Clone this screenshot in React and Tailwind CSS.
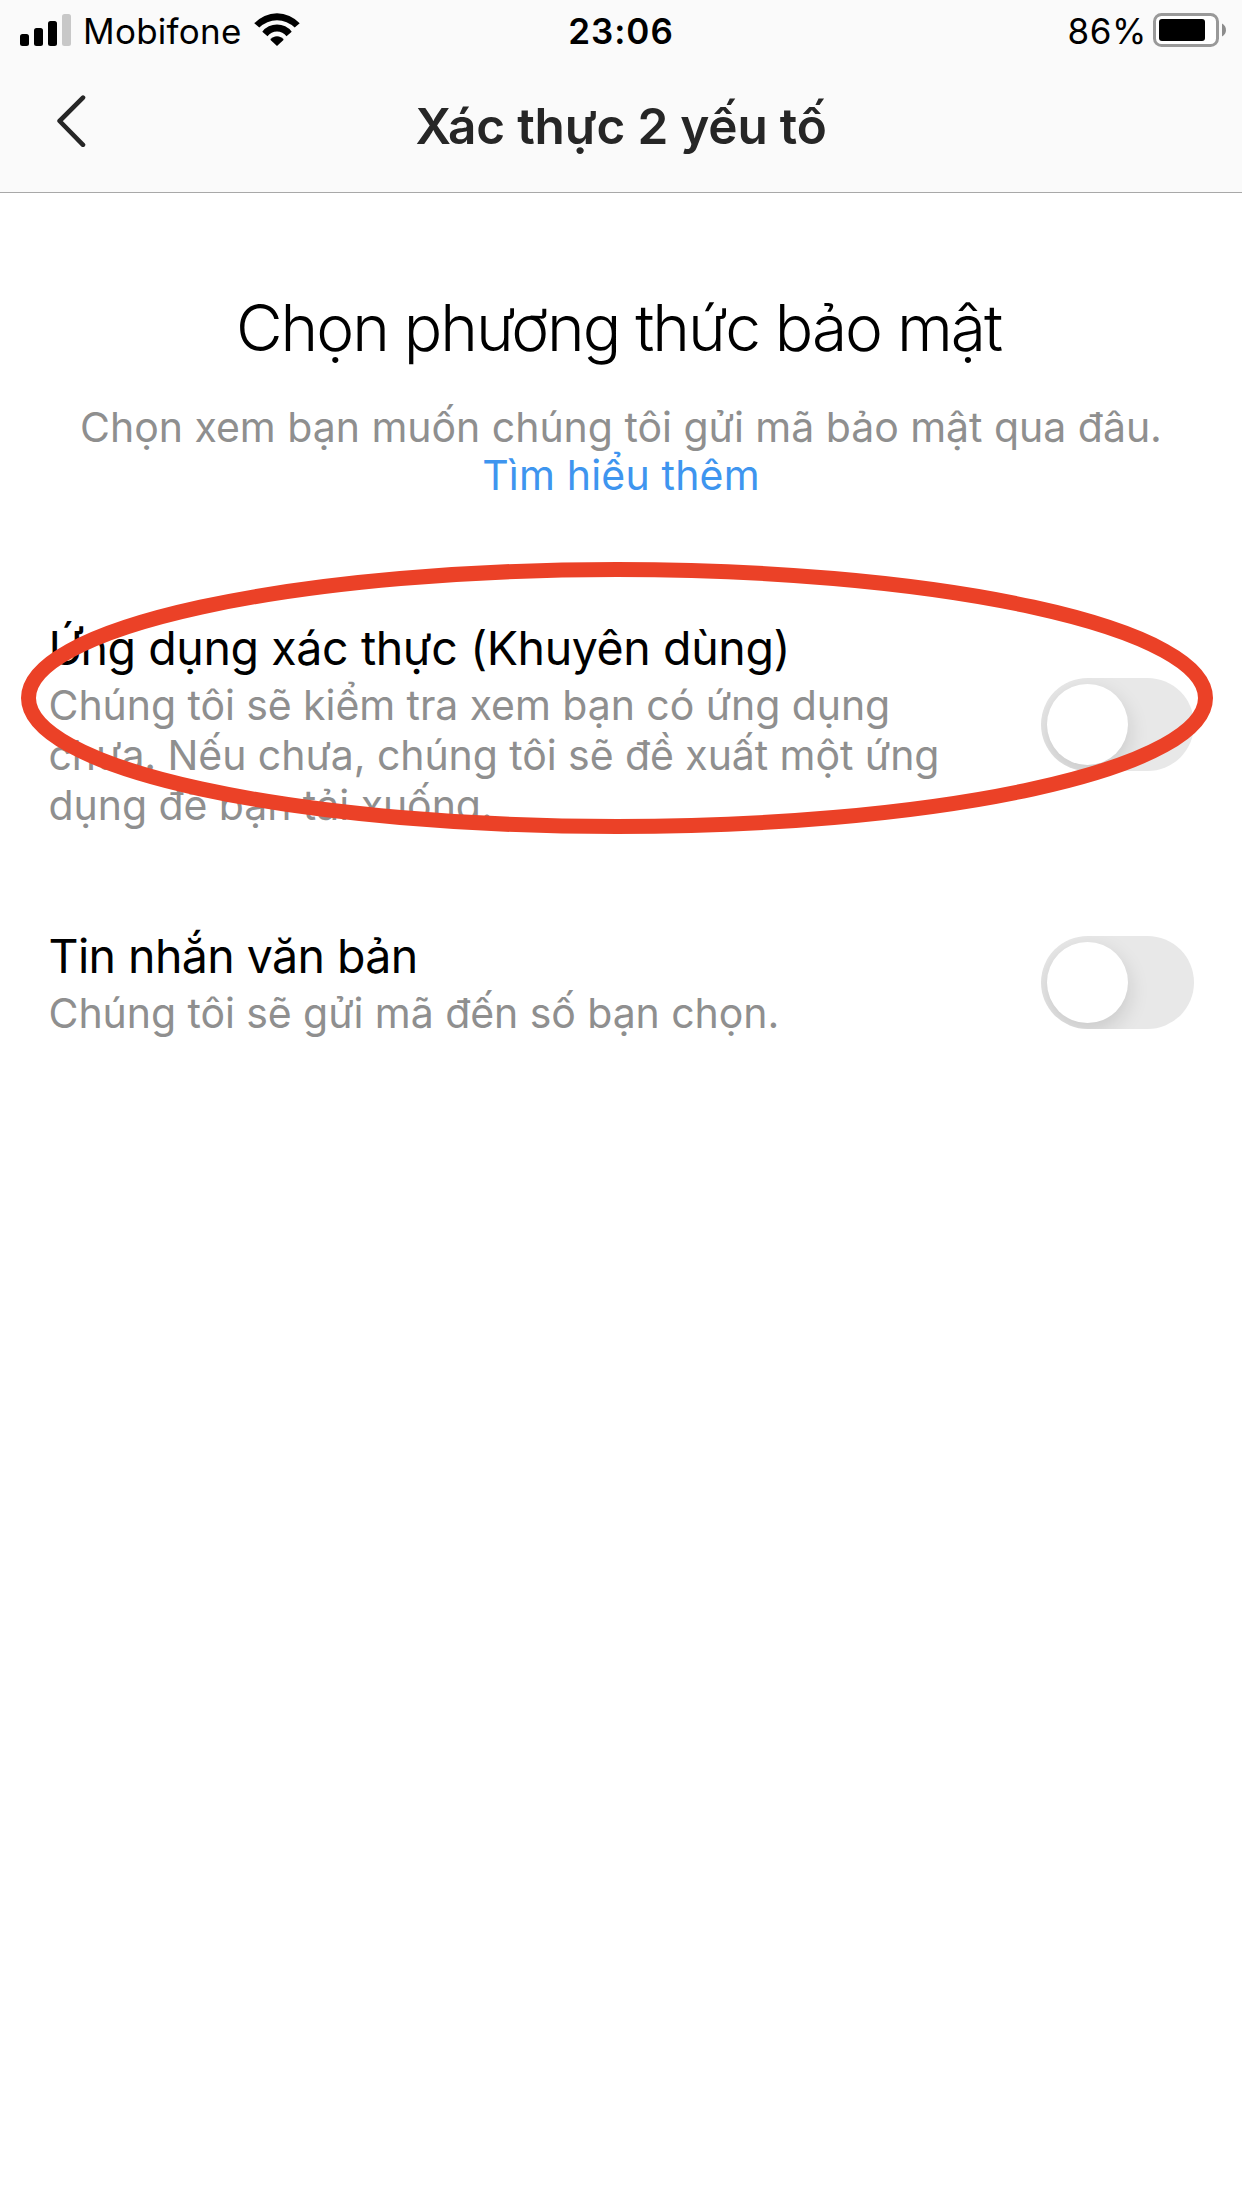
import React from "react";

const SignalIcon = () => (
  <svg className="mt-[14px] ml-5 h-8 w-[51px] shrink-0" viewBox="0 0 51 32">
    <rect x="0" y="20" width="9" height="12" rx="2.5" fill="#000" />
    <rect x="14" y="14" width="9" height="18" rx="2.5" fill="#000" />
    <rect x="28" y="7" width="9" height="25" rx="2.5" fill="#000" />
    <rect x="42" y="0" width="9" height="32" rx="2.5" fill="#c8c8c8" />
  </svg>
);

const WifiIcon = () => (
  <svg className="mt-[13px] h-[33px] w-[46px] shrink-0" viewBox="0 0 46 33" fill="#000">
    <path d="M0.3 10.3 A30.8 30.8 0 0 1 45.7 10.3 L40.7 14.6 A25.1 25.1 0 0 0 5.3 14.6 Z" />
    <path d="M8.3 18.7 A18.5 18.5 0 0 1 37.7 18.7 L32.5 23.2 A12 12 0 0 0 13.5 23.2 Z" />
    <path d="M16.3 26.8 A8.2 8.2 0 0 1 29.7 26.8 L23 33 Z" />
  </svg>
);

const BatteryIcon = () => (
  <svg className="mt-[13px] h-[34px] w-[73px] shrink-0" viewBox="0 0 73 34">
    <rect x="1.5" y="1.5" width="63" height="31" rx="7" fill="#fff" stroke="#999" strokeWidth="3" />
    <rect x="6" y="6" width="46" height="22" rx="3" fill="#000" />
    <path d="M69 10.5 C74.3 13 74.3 21 69 23.5 Z" fill="#8c8c8c" />
  </svg>
);

function StatusBar() {
  return (
    <div className="grid h-[62px] grid-cols-3 text-[35px] leading-[62px] text-black">
      <div className="flex">
        <SignalIcon />
        <span className="ml-3 w-[171px] tracking-[0.27px]">Mobifone</span>
        <WifiIcon />
      </div>
      <div className="text-center font-semibold tracking-[0.99px]">23:06</div>
      <div className="flex justify-end pr-4">
        <span className="mr-[6px] tracking-[0.6px]">86%</span>
        <BatteryIcon />
      </div>
    </div>
  );
}

function NavBar() {
  return (
    <div className="grid h-[130px] grid-cols-[200px_1fr_200px]">
      <button className="flex items-start pt-[33px] pl-[57px]" aria-label="Back">
        <svg className="h-[52px] w-[29px]" viewBox="0 0 29 52" fill="none" stroke="#262626" strokeWidth="4.6" strokeLinecap="round" strokeLinejoin="round">
          <path d="M26 2.6 L2.6 26 L26 49.8" />
        </svg>
      </button>
      <h1 className="text-center text-[49.5px] leading-[128px] font-semibold tracking-[-0.19px] whitespace-nowrap text-[#262626]">
        Xác thực 2 yếu tố
      </h1>
    </div>
  );
}

const Toggle = () => (
  <div role="switch" aria-checked="false" className="h-[93px] w-[153px] shrink-0 overflow-hidden rounded-full bg-[#e8e8e8] p-[6px]">
    <div className="size-[81px] rounded-full bg-white shadow-[0_8px_22px_rgba(0,0,0,0.14)]" />
  </div>
);

function Option({ title, titleClass, lines }) {
  return (
    <div className="flex items-center justify-between pr-12 pl-[48.5px]">
      <div className="whitespace-nowrap">
        <h3 className={"text-[46.5px] leading-[60px] text-black " + titleClass}>{title}</h3>
        <p className="mt-[2px] text-[41px] leading-[50px] tracking-[-0.065px] text-[#8f8f8f]">
          {lines.map((line) => (
            <span key={line} className="block">{line}</span>
          ))}
        </p>
      </div>
      <Toggle />
    </div>
  );
}

export default function App() {
  return (
    <div className="relative h-[2208px] w-[1242px] overflow-hidden bg-white font-['Inter',sans-serif]">
      <header className="h-[193px] border-b border-[#a8a8a8] bg-[#fafafa]">
        <StatusBar />
        <NavBar />
      </header>
      <main>
        <section className="pt-[95px] text-center whitespace-nowrap">
          <h2 className="pr-[5px] text-[64px] leading-[80px] font-light tracking-[-2.03px] text-black">Chọn phương thức bảo mật</h2>
          <p className="mt-[35px] text-[41px] leading-[48px] tracking-[-0.025px] text-[#8f8f8f]">
            Chọn xem bạn muốn chúng tôi gửi mã bảo mật qua đâu.
          </p>
          <a className="block text-[41px] leading-[48px] tracking-[0.19px] text-[#3e95ef]">Tìm hiểu thêm</a>
        </section>
        <section className="mt-[119px] flex flex-col gap-24">
          <Option
            title="Ứng dụng xác thực (Khuyên dùng)"
            titleClass="tracking-[-0.39px] first-letter:tracking-[-2.6px]"
            lines={["Chúng tôi sẽ kiểm tra xem bạn có ứng dụng", "chưa. Nếu chưa, chúng tôi sẽ đề xuất một ứng", "dụng để bạn tải xuống."]}
          />
          <Option title="Tin nhắn văn bản" titleClass="tracking-[-0.585px]" lines={["Chúng tôi sẽ gửi mã đến số bạn chọn."]} />
        </section>
      </main>
      <svg className="pointer-events-none absolute top-[562px] left-[21px] h-[272px] w-[1192px]" viewBox="0 0 1192 272" fill="none">
        <ellipse cx="596" cy="136" rx="588.5" ry="128.5" stroke="#eb4127" strokeWidth="15" />
      </svg>
    </div>
  );
}
